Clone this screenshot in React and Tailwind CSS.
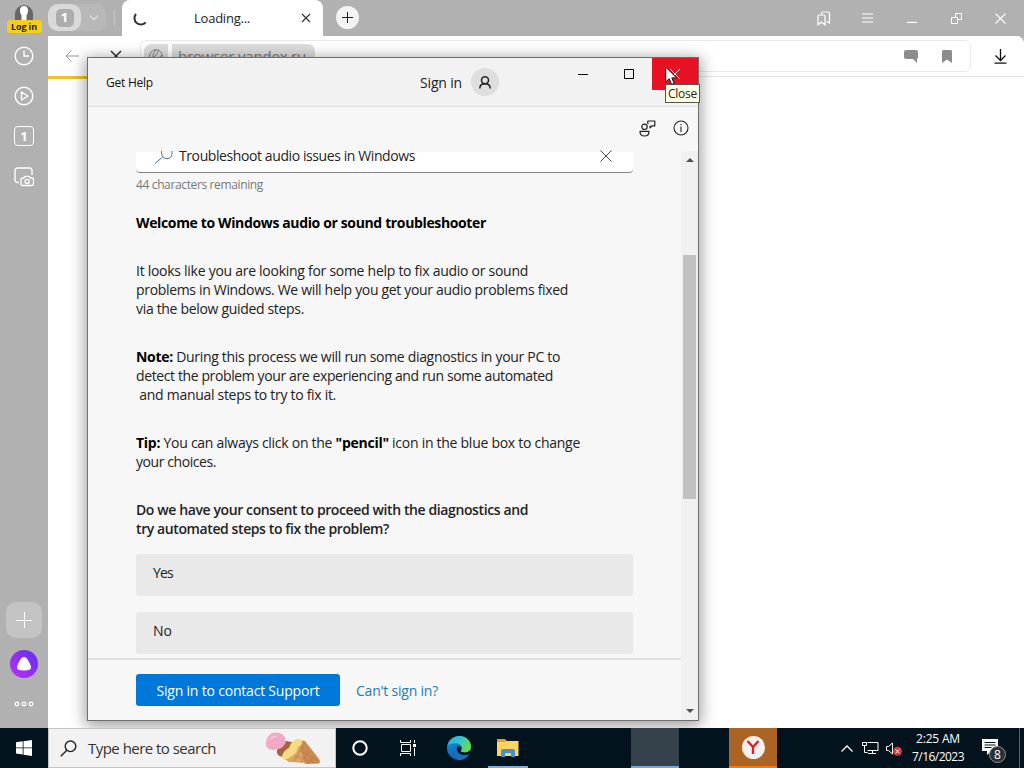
import React, { useLayoutEffect, useRef } from "react";

const FONT = "font-['Open_Sans','Noto_Sans',sans-serif]";

// One line of text, tracked so that it fills the given width.
function Fit({ w, className = "", children }) {
  const ref = useRef(null);
  useLayoutEffect(() => {
    const el = ref.current;
    el.style.letterSpacing = "0px";
    const natural = el.getBoundingClientRect().width;
    el.style.letterSpacing = (w - natural) / el.textContent.length + "px";
  }, [w]);
  return (
    <span ref={ref} className={"inline-block whitespace-pre " + className}>
      {children}
    </span>
  );
}

function Svg({ w, h, className = "", sw = 1, children }) {
  return (
    <svg
      width={w}
      height={h}
      viewBox={`0 0 ${w} ${h}`}
      fill="none"
      stroke="currentColor"
      strokeWidth={sw}
      className={"block shrink-0 " + className}
    >
      {children}
    </svg>
  );
}

function SideBar() {
  return (
    <aside className="flex h-full w-12 shrink-0 flex-col items-center bg-[#b1b1b1] text-white">
      <div className="flex h-[34px] w-full flex-col items-center pt-1">
        <Svg w={20} h={16} className="shrink-0">
          <path d="M1 16V10a9 9 0 0 1 18 0v6z" fill="#666" stroke="none" />
          <path d="M10 2c3 0 4.200 2.200 4 5-.2 2.200-.8 3.500-1.500 4.500V16h-5v-4.500C6.800 10.500 6.200 9.200 6 7c-.2-2.800 1-5 4-5z" fill="#fff" stroke="none" />
        </Svg>
        <div className="flex h-[13px] w-[35px] items-center justify-center rounded-[3px] bg-[#f3ce1c] text-[9px] font-bold leading-none text-[#2a1d10]">
          <Fit w={26}>Log in</Fit>
        </div>
      </div>
      <div className="flex flex-col items-center gap-5 pt-3">
        <Svg w={20} h={20} sw={1.4}>
          <circle cx="10" cy="10" r="8.800" />
          <path d="M10 4.500V10h5" />
        </Svg>
        <Svg w={20} h={20} sw={1.4}>
          <circle cx="10" cy="10" r="8.800" />
          <path d="M7.500 6v8l6.500-4z" strokeLinejoin="round" />
        </Svg>
        <div className="flex size-5 items-center justify-center rounded-[4px] border-[1.500px] border-white text-[13px] font-bold leading-none">
          1
        </div>
        <Svg w={20} h={20} sw={1.4} className="mt-px">
          <path d="M5 15.500H3.500a2.500 2.500 0 0 1-2.500-2.500V3.500A2.500 2.500 0 0 1 3.500 1h12A2.500 2.500 0 0 1 18 3.500V8" />
          <path d="M7 12.500q0-1.500 1.500-1.500h1.500l1.200-1.600h4l1.200 1.600H18q1.500 0 1.500 1.500V17q0 1.500-1.500 1.500H8.500Q7 18.500 7 17z" strokeWidth="1.300" />
          <circle cx="13.200" cy="14.400" r="2.100" strokeWidth="1.300" />
        </Svg>
      </div>
      <div className="mt-auto flex flex-col items-center pb-5">
        <div className="flex size-9 items-center justify-center rounded-[10px] bg-[#c3c3c3]">
          <Svg w={16} h={16} className="mr-px">
            <path d="M8.500 0v16M0 8.500h16" />
          </Svg>
        </div>
        <div className="mt-3 flex size-7 items-center justify-center rounded-full bg-linear-to-tr from-[#c026f5] to-[#5b2bf0]">
          <Svg w={16} h={16}>
            <path d="M8 1c2 0 3.200 1.800 4.600 4.300C14 7.900 15 9.800 15 11.500c0 2.300-3 3-7 3s-7-.7-7-3c0-1.700 1-3.600 2.400-6.200C4.800 2.800 6 1 8 1z" fill="#fff" stroke="none" />
          </Svg>
        </div>
        <Svg w={20} h={8} sw={1.3} className="mt-[22px]">
          <circle cx="3" cy="4" r="1.800" />
          <circle cx="10" cy="4" r="1.800" />
          <circle cx="17" cy="4" r="1.800" />
        </Svg>
      </div>
    </aside>
  );
}

function TabStrip() {
  return (
    <div className="flex h-9 shrink-0 bg-[#b1b1b1]">
      <div className="flex h-full w-[74px] shrink-0 items-center">
        <div className="mb-px flex h-[27px] w-[58px] items-center rounded-[9px] bg-[#b8b8b8]">
          <div className="flex h-[27px] w-[33px] items-center justify-center rounded-[10px] bg-[#d9d9d9]">
            <div className="flex size-[18px] items-center justify-center rounded-[5px] bg-[#adadad] text-[13px] font-bold leading-none text-white">
              1
            </div>
          </div>
          <Svg w={10} h={6} sw={1.3} className="ml-2 text-[#dedede]">
            <path d="M1 .5l4 4 4-4" />
          </Svg>
        </div>
        <div className="ml-2 h-4 w-px bg-[#c5c5c5]" />
      </div>
      <div className="flex h-full w-[201px] shrink-0 items-center rounded-t-[8px] bg-white">
        <Svg w={14} h={14} sw={2} className="ml-[11px] mt-px text-[#333]">
          <path d="M3 2a6 6 0 0 0 9.700 8.300" />
        </Svg>
        <div className="ml-[47px] text-[13px] leading-none text-[#222]">
          <Fit w={56}>Loading...</Fit>
        </div>
        <Svg w={10} h={10} sw={1.2} className="ml-[51px] text-[#333]">
          <path d="M1 1l8 8M9 1l-8 8" />
        </Svg>
      </div>
      <div className="ml-[13px] mt-1.5 flex size-[23px] items-center justify-center rounded-full bg-[#f4f4f4] text-[#222]">
        <Svg w={11} h={11}>
          <path d="M5.500 0v11M0 5.500h11" />
        </Svg>
      </div>
      <div className="ml-auto flex items-center pr-[18px] text-white">
        <Svg w={14} h={15} sw={1.2}>
          <path d="M1 5.500q0-1.500 1.500-1.500h4q1.500 0 1.500 1.500v8.300L4.500 11 1 13.800z" />
          <path d="M4.500 3.800V2.500Q4.500 1 6 1h5q1.500 0 1.500 1.500V12L9.800 10.500" />
        </Svg>
        <Svg w={12} h={10} sw={1.2} className="ml-[31px]">
          <path d="M0 1h11M0 5h11M0 9h11" />
        </Svg>
        <Svg w={10} h={10} sw={1.2} className="ml-[33px]">
          <path d="M0 9.400h10" />
        </Svg>
        <Svg w={11} h={11} className="ml-[34px]">
          <path d="M.5 4.500h6v6h-6zM4.500 4.500v-4h6v6h-4" />
        </Svg>
        <Svg w={11} h={11} sw={1.1} className="ml-[33px]">
          <path d="M.5 .5l10 10M10.500 .5l-10 10" />
        </Svg>
      </div>
    </div>
  );
}

function AddressBar() {
  return (
    <div className="flex h-[41px] shrink-0 items-center rounded-tr-[8px] border-b border-[#e6e6e6] bg-white">
      <Svg w={14} h={12} className="ml-[17px] text-[#999]">
        <path d="M14 6H1M6.500 .5L1 6l5.500 5.500" />
      </Svg>
      <Svg w={12} h={12} sw={1.4} className="ml-[31px] text-[#222]">
        <path d="M1 1l10 10M11 1L1 11" />
      </Svg>
      <div className="ml-[18px] flex h-8 w-[831px] items-center rounded-[7px] border border-[#e9e9e9] bg-white pl-[3px]">
        <div className="flex h-6 w-6 items-center justify-center rounded-l-[7px] bg-[#dddddd] text-[#7a7a7a]">
          <Svg w={14} h={14}>
            <circle cx="7" cy="7" r="6.300" />
            <path d="M7 1C3 5 3 9 7 13M1.500 10Q7 8 9.500 1.500M4 12q6-2 9-6" />
          </Svg>
        </div>
        <div className="ml-1 flex h-6 w-[143px] items-center rounded-r-[7px] bg-[#dddddd] pl-1.5 text-[15px] text-[#777]">
          <Fit w={128}>browser.yandex.ru</Fit>
        </div>
        <Svg w={14} h={13} className="ml-auto text-[#8c8c8c]">
          <path d="M2 0h10q2 0 2 2v5q0 1.500-1 1.800V13L9 9H2Q0 9 0 7V2q0-2 2-2z" fill="currentColor" stroke="none" />
        </Svg>
        <Svg w={10} h={13} className="ml-6 mr-[18px] text-[#8c8c8c]">
          <path d="M1.500 0h7Q10 0 10 1.500V13L5 9.500 0 13V1.500Q0 0 1.500 0z" fill="currentColor" stroke="none" />
        </Svg>
      </div>
      <Svg w={13} h={15} sw={1.3} className="ml-[23px] text-[#111]">
        <path d="M6.500 0v11.500M1.500 6.500l5 5 5-5M.5 14.200h12" />
      </Svg>
    </div>
  );
}

function TitleBar() {
  return (
    <div className="flex h-[49px] shrink-0 items-start border-b border-[#dedede] bg-[#f2f2f2]">
      <div className="ml-[18px] mt-4 text-[12px] leading-[18px] text-[#111]">
        <Fit w={47}>Get Help</Fit>
      </div>
      <div className="ml-[267px] mt-[15px] text-[14px] leading-5 text-[#222]">
        <Fit w={42}>Sign in</Fit>
      </div>
      <div className="ml-[9px] mt-2.5 flex size-7 items-center justify-center rounded-full bg-[#dedede] text-[#222]">
        <Svg w={12} h={13} sw={1.5}>
          <circle cx="6" cy="4.300" r="3.500" />
          <path d="M.8 12.500c0-3.200 2-4.700 5.200-4.700s5.200 1.500 5.200 4.700" />
        </Svg>
      </div>
      <Svg w={10} h={10} className="ml-[79px] mt-[11px] text-black">
        <path d="M0 5.500h10" />
      </Svg>
      <Svg w={10} h={10} className="ml-9 mt-[11px] text-black">
        <path d="M.5 .5h9v9h-9z" />
      </Svg>
      <div className="ml-auto flex h-8 w-[46px] items-center justify-center bg-[#e81123] text-white">
        <Svg w={10} h={10}>
          <path d="M0 0l10 10M10 0L0 10" />
        </Svg>
      </div>
    </div>
  );
}

function HelpWindow() {
  return (
    <section className="absolute left-[87px] top-[57px] flex h-[664px] w-[612px] flex-col border border-[#6e6e6e] bg-[#f7f7f7] shadow-[0_3px_14px_2px_rgba(0,0,0,0.38)]">
      <TitleBar />
      <div className="flex h-[42px] shrink-0 items-center justify-end gap-[17px] pr-[9px] text-[#222]">
        <Svg w={17} h={17} sw={1.2}>
          <circle cx="5.500" cy="6.800" r="2.700" />
          <path d="M1 11.400h9q0 4.600-4.500 4.600T1 11.400z" strokeLinejoin="round" />
          <path d="M8.800 4V1h7v4.800h-2.600L11 7.800V5.800" strokeLinejoin="round" />
        </Svg>
        <Svg w={16} h={16} sw={1.1}>
          <circle cx="8" cy="8" r="7" />
          <path d="M8 6.500V12M8 4v1.300" />
        </Svg>
      </div>
      <div className="flex min-h-0 flex-1">
        <div className="flex flex-1 flex-col">
          <div className="flex h-[511px] shrink-0 flex-col overflow-hidden border-b-2 border-[#dfdfdf] pl-12 text-[14px] leading-[19px] text-[#222]">
            <div className="mt-[3px] flex h-[21px] w-[497px] shrink-0 items-start rounded-b-[4px] border-b border-[#858585] bg-white">
              <Svg w={18} h={14} className="ml-[19px] -mt-px text-[#51708b]">
                <path d="M6.500 0q-.3 2 .5 4.200Q8.500 7.800 12 7.800q4.500-.3 5-5.300V0M7.500 6L0 12.500" />
              </Svg>
              <div className="-mt-[3px] ml-[6px] leading-[13px]">
                <Fit w={236}>Troubleshoot audio issues in Windows</Fit>
              </div>
              <Svg w={12} h={12} className="-mt-[2px] ml-[185px] text-[#444]">
                <path d="M.5 .5l11 11M11.500 .5l-11 11" />
              </Svg>
            </div>
            <div className="mt-[2px] text-[12px] text-[#777]">
              <Fit w={127}>44 characters remaining</Fit>
            </div>
            <h1 className="mt-[19px] font-bold text-black">
              <Fit w={350}>Welcome to Windows audio or sound troubleshooter</Fit>
            </h1>
            <div className="mt-[29px] flex flex-col items-start">
              <Fit w={392}>It looks like you are looking for some help to fix audio or sound</Fit>
              <Fit w={432}>problems in Windows. We will help you get your audio problems fixed</Fit>
              <Fit w={168}>via the below guided steps.</Fit>
            </div>
            <div className="mt-[29px] flex flex-col items-start">
              <Fit w={424}>
                <b className="text-black">Note:</b> During this process we will run some diagnostics in your PC to
              </Fit>
              <Fit w={417}>detect the problem your are experiencing and run some automated</Fit>
              <Fit w={200}> and manual steps to try to fix it.</Fit>
            </div>
            <div className="mt-[29px] flex flex-col items-start">
              <Fit w={444}>
                <b className="text-black">Tip:</b> You can always click on the <b className="text-black">"pencil"</b> icon in the blue box to change
              </Fit>
              <Fit w={80}>your choices.</Fit>
            </div>
            <div className="mt-[29px] flex flex-col items-start font-semibold">
              <Fit w={392}>Do we have your consent to proceed with the diagnostics and</Fit>
              <Fit w={253}>try automated steps to fix the problem?</Fit>
            </div>
            <div className="mt-4 flex w-[497px] flex-col gap-4">
              <div className="h-[42px] rounded-[3px] bg-[#e9e9e9] pl-[17px] pt-[9px]">
                <Fit w={20}>Yes</Fit>
              </div>
              <div className="h-[42px] rounded-[3px] bg-[#e9e9e9] pl-[17px] pt-[9px]">
                <Fit w={19}>No</Fit>
              </div>
            </div>
          </div>
          <div className="flex flex-1 items-center gap-4 pl-12 text-[14px]">
            <div className="flex h-8 w-[204px] items-center justify-center rounded-[3px] bg-[#0078d9] text-white">
              <Fit w={163}>Sign in to contact Support</Fit>
            </div>
            <div className="text-[#1f7cb4]">
              <Fit w={82}>Can't sign in?</Fit>
            </div>
          </div>
        </div>
        <div className="mt-[2px] flex w-[17px] shrink-0 flex-col items-center bg-[#f1f1f1] text-[#505050]">
          <Svg w={8} h={4} className="mt-[7px]">
            <path d="M0 4l4-4 4 4z" fill="currentColor" stroke="none" />
          </Svg>
          <div className="mt-[93px] h-[244px] w-[13px] bg-[#c1c1c1]" />
          <Svg w={8} h={4} className="mb-[7px] mt-auto">
            <path d="M0 0l4 4 4-4z" fill="currentColor" stroke="none" />
          </Svg>
        </div>
      </div>
    </section>
  );
}

function IceCream() {
  return (
    <Svg w={56} h={34}>
      <g stroke="none">
        <path d="M18 26l8-12 9-6 19 20q2 3-1 3.500L24 30z" fill="#dba465" />
        <path d="M33 8l7 1 14 18q2 4-1 4.500l-13 .5z" fill="#c98b50" />
        <path d="M12 18q4-8 10-9l8 2-6 12-6 2q-7-1-6-7z" fill="#a5633f" />
        <path d="M17 24q2-6 7-8 2-7 8-9 5-1 5 3 0 4-4 5-1 6-5 8-5 5-9 4-3-1-2-3z" fill="#f5dc82" />
        <path d="M1 14Q0 5 7 1q8-2 12 3 3 4 1 8-3 5-8 5-7 3-11-3z" fill="#f3a8c6" />
        <path d="M4 8q3-5 9-4-5 1-9 4z" fill="#fbd3e3" />
      </g>
      <path d="M30 24l20 7M34 18l20 11M38 14l-9 15M44 19l-8 12M49 24l-6 8" stroke="#b87a42" strokeWidth=".7" />
    </Svg>
  );
}

function Taskbar() {
  return (
    <footer className="flex h-10 shrink-0 items-center bg-[#02131d] text-white">
      <div className="flex w-12 shrink-0 justify-center">
        <Svg w={16} h={16}>
          <path d="M0 2.300l6.700-1v6.200H0zM7.500 1.200L16 0v7.500H7.500zM0 8.300h6.700v6.200L0 13.600zM7.500 8.300H16V16l-8.500-1.300z" fill="#fff" stroke="none" />
        </Svg>
      </div>
      <div className="flex h-full w-72 shrink-0 items-center border border-[#c4c4c4] bg-[#f2f2f2] text-[#333]">
        <Svg w={17} h={17} sw={1.4} className="ml-[11px] text-[#222]">
          <circle cx="10.500" cy="6.300" r="5.300" />
          <path d="M6.800 10.200L.8 16.200" />
        </Svg>
        <div className="ml-[11px] text-[15px]">
          <Fit w={128}>Type here to search</Fit>
        </div>
        <div className="ml-[49px] mt-0.5">
          <IceCream />
        </div>
      </div>
      <div className="flex h-full w-12 shrink-0 items-center justify-center">
        <Svg w={18} h={18} sw={2}>
          <circle cx="9" cy="9" r="6.700" />
        </Svg>
      </div>
      <div className="flex h-full w-12 shrink-0 items-center justify-center">
        <Svg w={16} h={16}>
          <path d="M.5 0v2.500h10V0M.5 16v-2.500h10V16M1.500 4.500h9v7h-9zM14.500 0v3M14.500 8v8" />
          <path d="M13 4h3v3h-3z" fill="#fff" stroke="none" />
        </Svg>
      </div>
      <div className="mr-[3px] flex h-full w-[53px] shrink-0 items-center justify-center">
        <Svg w={24} h={24}>
          <defs>
            <linearGradient id="edgeTop" x1="0" y1="0" x2="1" y2=".5">
              <stop offset="0" stopColor="#26a5e2" />
              <stop offset=".5" stopColor="#32c5cf" />
              <stop offset="1" stopColor="#64de4d" />
            </linearGradient>
            <linearGradient id="edgeSide" x1="0" y1="0" x2=".6" y2="1">
              <stop offset="0" stopColor="#1b96e3" />
              <stop offset="1" stopColor="#0c56a8" />
            </linearGradient>
          </defs>
          <g stroke="none">
            <circle cx="12" cy="12" r="12" fill="url(#edgeSide)" />
            <path d="M.5 9.500C2 3.500 7 0 12.500 0 19 0 24 5 24 10.500c0 4-3 6-6.300 6-2.500 0-4-.8-4-1.700 0-.6 1-1.200 1-3 0-2.500-2.600-4.500-6-4.500C5 7.300 2 8 .5 9.500z" fill="url(#edgeTop)" />
            <path d="M9.500 10.500c-1.500 4 2 9 7 9 2.500 0 4.500-.8 6-2-2 4-6 6.500-10.500 6.500C6 22 5 13 9.500 10.500z" fill="#1670bd" />
            <path d="M10 11c2-1.500 4.700-.3 4.700 1.500 0 1.300-1 1.600-1 2.300 0 .9 1.500 1.700 4 1.700 2 0 3.500-.6 4.600-1.500l1.700-.6-1.300 3.600c-5 2.600-14 .4-12.700-7z" fill="#03131f" />
          </g>
        </Svg>
      </div>
      <div className="flex h-full w-10 shrink-0 flex-col items-center border-b-2 border-[#76b0e0] pt-[11px]">
        <Svg w={22} h={18}>
          <g stroke="none">
            <path d="M0 0h8l2 2h11v15H0z" fill="#e5a22b" />
            <path d="M0 3h8l2-1h11.500v15H0z" fill="#fcd462" />
            <path d="M4 18v-6q0-2 2-2h10q2 0 2 2v6h-4v-4H8v4z" fill="#4291c9" />
          </g>
        </Svg>
      </div>
      <div className="ml-[103px] h-full w-12 shrink-0 border-b-2 border-[#76a9d9] bg-[#35414b]" />
      <div className="ml-[50px] flex h-full w-12 shrink-0 items-center justify-center border-b-2 border-[#ff7b00] bg-[#ab6424]">
        <div className="flex size-[23px] items-center justify-center rounded-full bg-[#f4f0ed]">
          <Svg w={14} h={16} sw={2.4} className="text-[#d8232a]">
            <path d="M1.500 2L7 8l5.500-6M7 7.500V15" />
          </Svg>
        </div>
      </div>
      <div className="ml-[64px] flex h-full flex-1 items-center">
        <Svg w={12} h={7} sw={1.3}>
          <path d="M.5 6.500L6 1l5.500 5.500" />
        </Svg>
        <Svg w={17} h={14} className="ml-[9px]">
          <path d="M5.500 1.500h10.500v8H5.500M.5 1.500h4v3h-4zM2.500 4.500v7h3M10.500 9.500v3M6 12.500h8" />
        </Svg>
        <Svg w={17} h={15} className="ml-[7px]">
          <path d="M.5 5.500h2L6.500 2v11l-4-3.500h-2z" />
          <circle cx="11.500" cy="10.300" r="4.500" fill="#d9343a" stroke="none" />
          <path d="M9.500 8.300l4 4M13.500 8.300l-4 4" />
        </Svg>
        <div className="ml-[9px] flex w-[52px] flex-col items-center text-[12px] leading-[18px]">
          <Fit w={44}>2:25 AM</Fit>
          <Fit w={52}>7/16/2023</Fit>
        </div>
        <div className="relative ml-[18px] mt-1">
          <Svg w={24} h={24}>
            <path d="M0 1h16v12H9.500L5 17v-4H0z" fill="#fff" stroke="none" />
            <path d="M2.500 4.500h11M2.500 7h11M2.500 9.500h7" stroke="#02131d" />
          </Svg>
          <span className="absolute left-[7px] top-2 flex size-[17px] items-center justify-center rounded-full border border-[#8d9297] bg-[#2b3035] text-[12px] leading-none">
            8
          </span>
        </div>
        <div className="ml-auto mr-1 h-full w-px bg-[#56606a]" />
      </div>
    </footer>
  );
}

export default function App() {
  return (
    <div className={"relative flex h-[768px] w-[1024px] flex-col overflow-hidden bg-white " + FONT}>
      <div className="flex h-[728px] shrink-0">
        <SideBar />
        <div className="flex flex-1 flex-col bg-[#b1b1b1]">
          <TabStrip />
          <div className="flex flex-1 flex-col rounded-t-[8px] bg-white">
            <AddressBar />
            <div className="-mt-px h-[3px] w-60 bg-[#f0c322]" />
          </div>
        </div>
      </div>
      <HelpWindow />
      <div className="relative">
        <Taskbar />
      </div>
      <div className="absolute left-[665px] top-[84px] flex h-[19px] w-[35px] items-center justify-center border border-[#555] bg-[#ffffe1] text-[12px] leading-none text-[#222]">
        <Fit w={29}>Close</Fit>
      </div>
      <Svg w={13} h={20} className="absolute left-[665px] top-[66px]">
        <path d="M.7 1v15l3.500-3.300L6.600 18.500l2.600-1.100-2.400-5.500h4.800z" fill="#fff" stroke="#111" />
      </Svg>
    </div>
  );
}
